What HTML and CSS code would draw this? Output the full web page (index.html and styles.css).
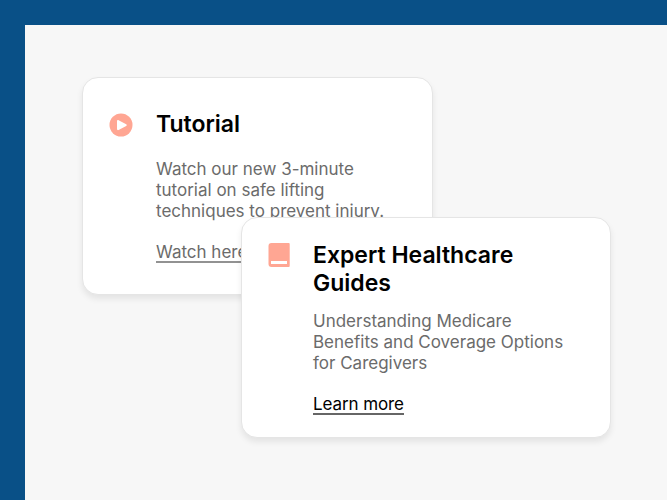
FILE: index.html
```html
<!DOCTYPE html>
<html lang="en">
<head>
  <meta charset="UTF-8" />
  <title>Caregiver Resources</title>
  <link rel="stylesheet" href="styles.css">
</head>
<body>
  <main class="panel">
    <section class="card card-tutorial">
      <svg class="icon" width="24" height="24" viewBox="0 0 24 24">
        <circle cx="12" cy="12" r="11.5" fill="#ffa693" />
        <path d="M8 8.2v7.9c0 .9.8 1.4 1.6 1l7.6-4.2c.8-.4.8-1.3 0-1.7L9.600 7.200C8.800 6.800 8 7.300 8 8.200z" fill="#fff" />
      </svg>
      <div class="card-body">
        <h2>Tutorial</h2>
        <p>Watch our new 3-minute<br>tutorial on safe lifting<br>techniques to prevent injury.</p>
        <a href="#" class="card-link">Watch here</a>
      </div>
    </section>

    <section class="card card-guides">
      <svg class="icon" width="24" height="24" viewBox="0 0 24 24">
        <path d="M4.500 0h17.200a1 1 0 0 1 1 1v22a1 1 0 0 1-1 1H4.500a3 3 0 0 1-3-3V3a3 3 0 0 1 3-3z" fill="#ffa693" />
        <path d="M4 18h16v3H4z" fill="#fff" />
      </svg>
      <div class="card-body">
        <h2>Expert Healthcare<br>Guides</h2>
        <p>Understanding Medicare<br>Benefits and Coverage Options<br>for Caregivers</p>
        <a href="#" class="card-link">Learn more</a>
      </div>
    </section>
  </main>
</body>
</html>
```
FILE: styles.css
```css
body {
    margin: 0;
    padding: 25px 0 0 25px;
    font-family: Inter, Arial, sans-serif;
    background-color: #095087;
}

.panel {
    display: flow-root;
    height: 475px;
    background-color: #f7f7f7;
}

.card {
    box-sizing: border-box;
    display: flex;
    position: relative;
    background-color: white;
    border: 1px solid #e5e5e5;
    border-radius: 16px;
    box-shadow: 0 4px 6px rgba(0,0,0,0.08);
}

.card-tutorial {
    width: 351px;
    height: 218px;
    margin: 52px 0 0 57px;
    padding: 32px 0 0 26px;
}

/* overlaps the tutorial card */
.card-guides {
    width: 370px;
    height: 221px;
    margin: -78px 0 0 216px;
    padding: 23px 0 0 25px;
}

.icon {
    flex: none;
    margin-top: 3px;
    margin-right: 23px;
}

.card-guides .icon {
    margin-top: 2px;
    margin-right: 22px;
}

.card h2 {
    margin: 0;
    font-size: 23px;
    line-height: 28px;
    font-weight: 600;
    color: black;
}

.card p {
    margin: 21px 0;
    font-size: 17px;
    line-height: 21px;
    color: #6b6b6b;
}

.card-guides p {
    margin-top: 14px;
}

.card-link {
    display: block;
    width: fit-content;
    font-size: 17px;
    line-height: 18px;
    color: #6b6b6b;
    text-decoration: none;
    border-bottom: 2px solid #929292;
}

.card-guides .card-link {
    color: black;
    letter-spacing: -0.1px;
    border-bottom-color: #666;
}
```
